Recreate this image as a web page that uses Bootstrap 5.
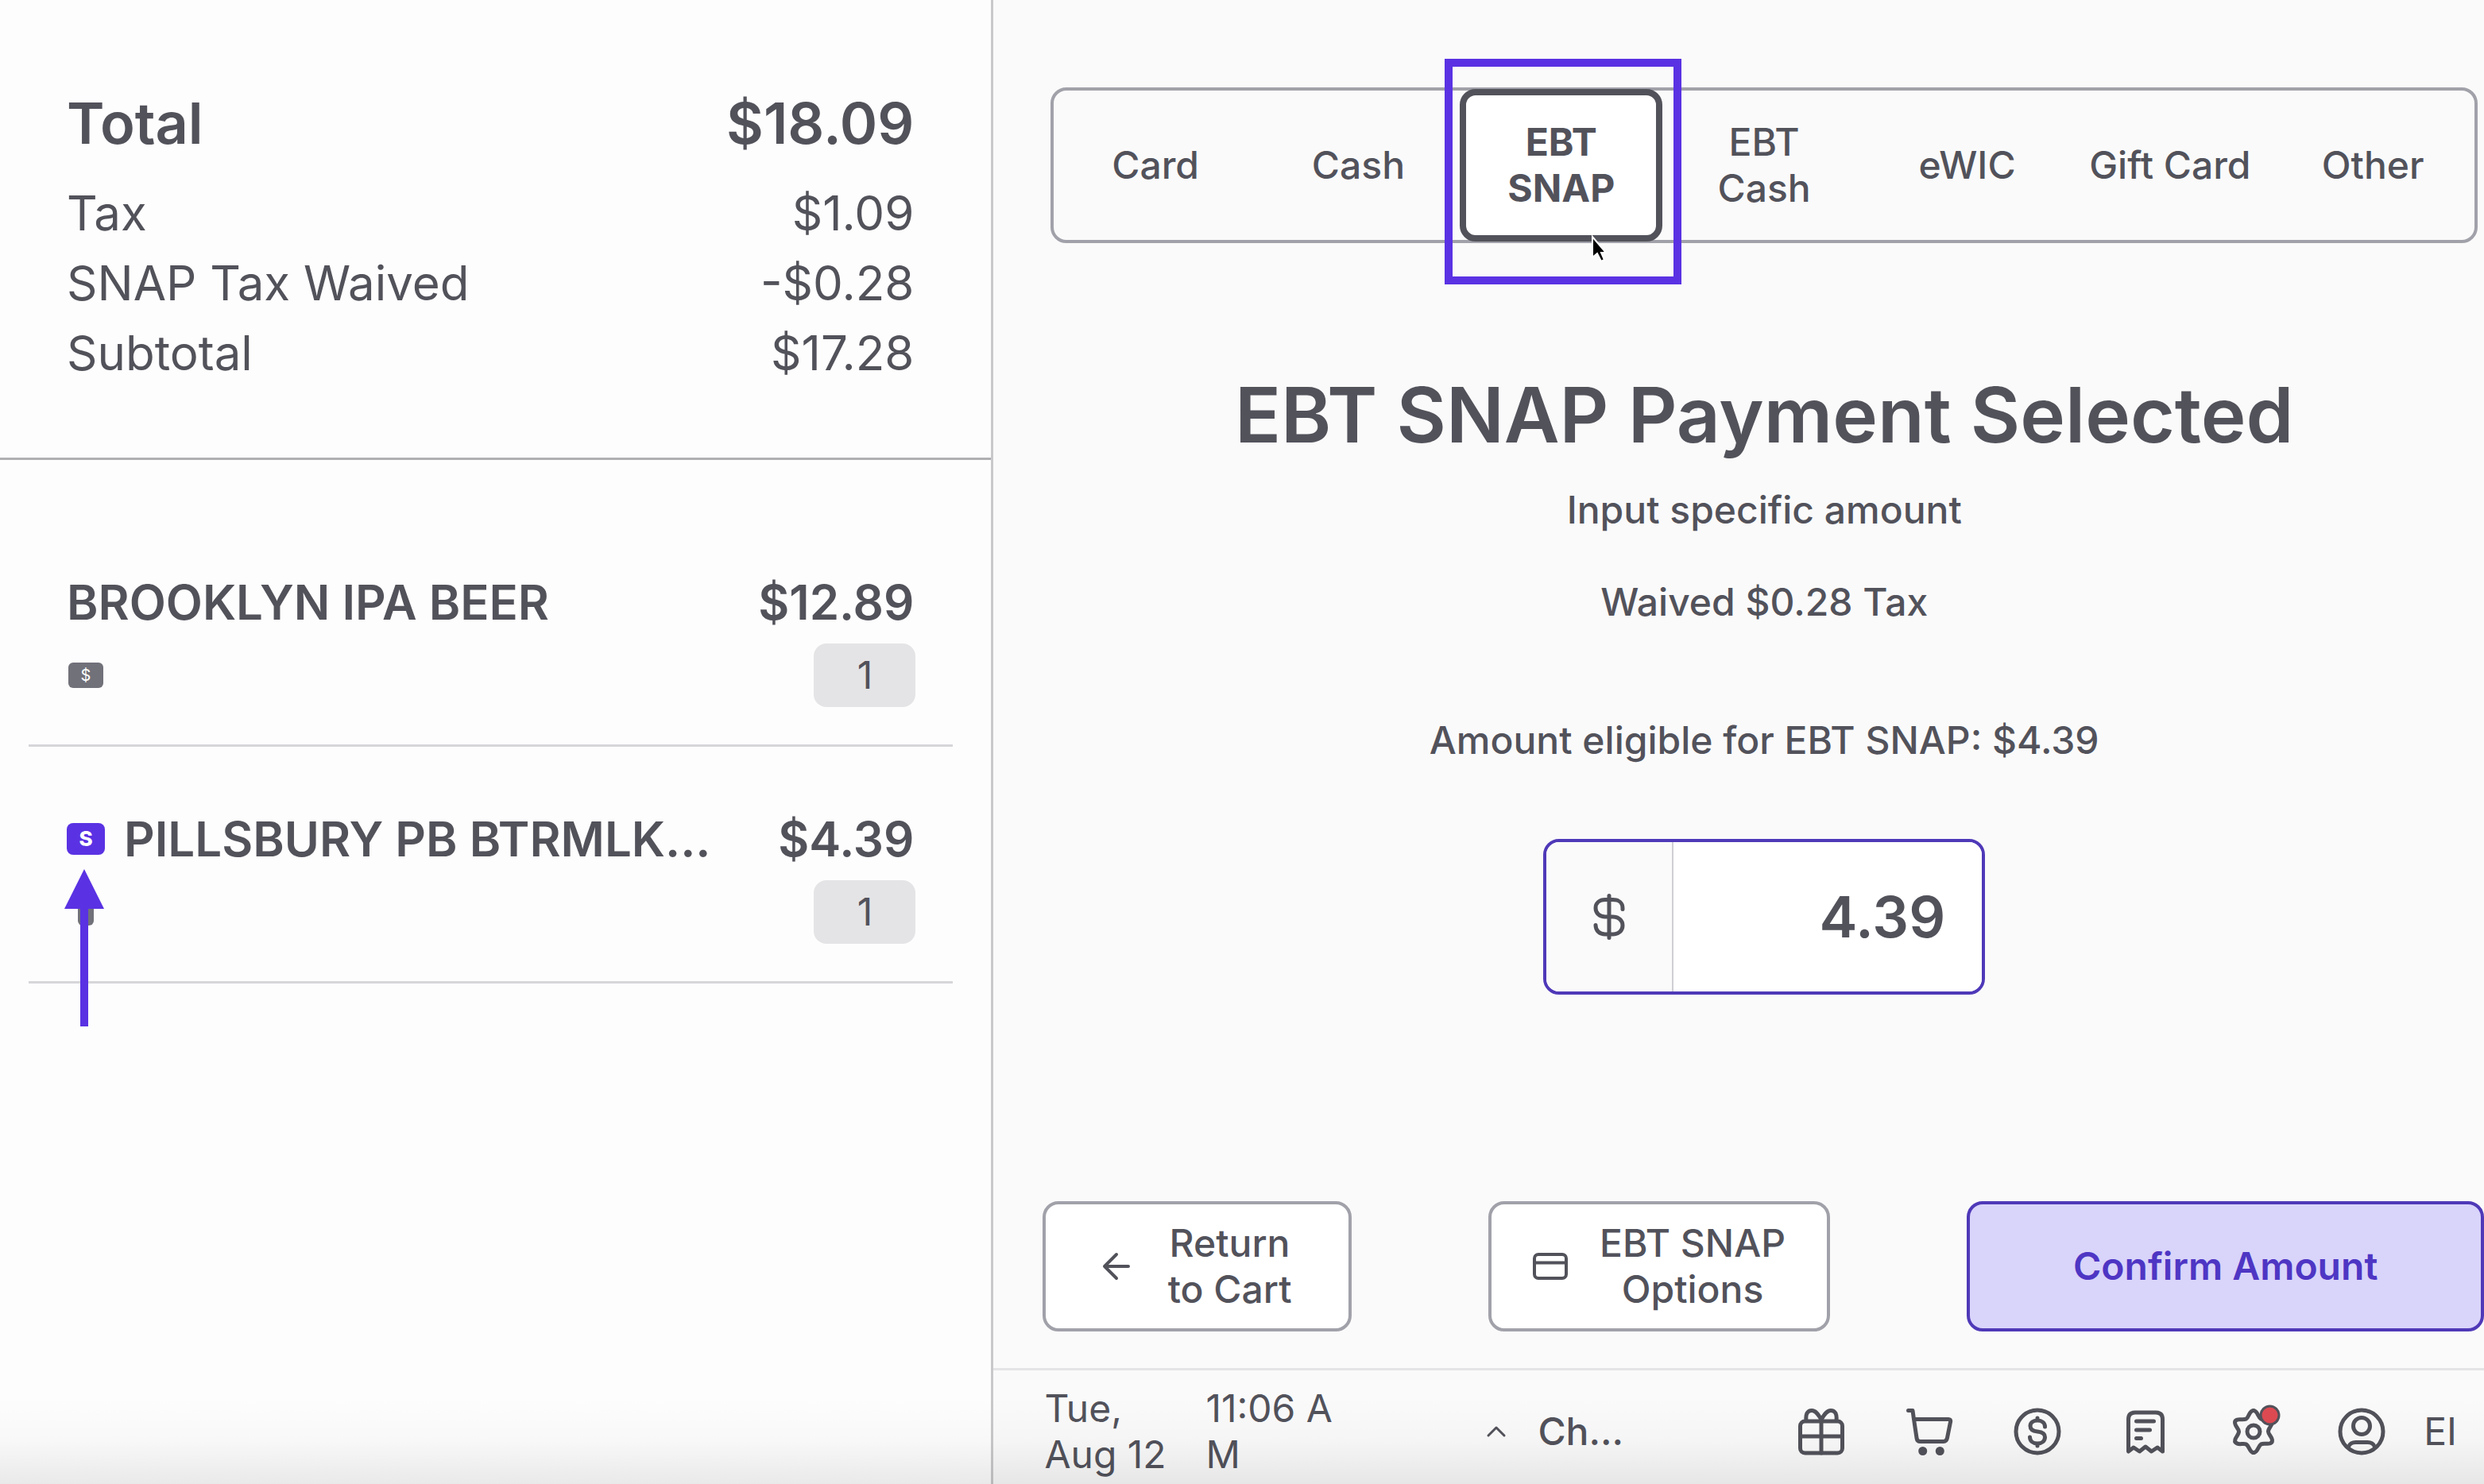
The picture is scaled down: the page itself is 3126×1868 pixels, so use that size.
<!DOCTYPE html>
<html lang="en">
<head>
<meta charset="utf-8">
<meta name="viewport" content="width=device-width, initial-scale=1">
<title>EBT SNAP Payment</title>
<link href="https://cdn.jsdelivr.net/npm/bootstrap@5.3.0/dist/css/bootstrap.min.css" rel="stylesheet">
<style>
  :root { --ink: #52525b; --line: #a1a1aa; --accent: #5a32e3; --accent-dark: #4f39b8; }
  body { font-family: Inter, "Liberation Sans", sans-serif; font-size: 48px; line-height: 58px; color: var(--ink); background: #fafafa; }
  svg { display: block; overflow: visible; flex: none; }
  .stroke-icon { fill: none; stroke: currentColor; stroke-width: 5; stroke-linecap: round; stroke-linejoin: round; }

  .cart-pane { flex: 0 0 40%; background: #fdfdfd; border-right: 3px solid #c8c8cb; }
  .totals { padding: 111px 97px 88px 84px; font-size: 60px; line-height: 88px; border-bottom: 3px solid #b0b0b3; }
  .grand-total { font-size: 72px; font-weight: 600; margin-bottom: 25px; }
  .line-items { margin: 0 48px 0 36px; padding-top: 63px; }
  .line-item { padding: 80px 47px 47px 48px; border-bottom: 3px solid #d6d6da; }
  .item-head { font-size: 60px; line-height: 72px; font-weight: 600; margin-bottom: 16px; padding-right: 2px; gap: 24px; }
  .qty { width: 128px; height: 80px; border: 0; border-radius: 16px; background: #e4e4e6; color: var(--ink); padding: 0; font-size: 48px; }
  .tag { display: flex; align-items: center; justify-content: center; color: #fff; border-radius: 6px; flex: none; }
  .tag-tender { width: 44px; height: 32px; margin-left: 2px; background: #71717a; font-size: 20px; line-height: 24px; }
  .tag-snap { width: 48px; height: 40px; border-radius: 8px; background: var(--accent); font-size: 26px; line-height: 32px; font-weight: 800; }
  .tag-small { width: 20px; height: 34px; margin-left: 14px; background: #71717a; }
  .arrow-note { position: absolute; left: -3px; top: 58px; color: var(--accent); }

  .pay-pane { min-width: 0; padding-top: 110px; }
  .tender-tabs { margin: 0 8px 156px 72px; height: 196px; border: 4px solid var(--line); border-radius: 20px; }
  .tender { width: 14.2857%; flex: none; padding: 0; border: 0; border-radius: 20px; background: none; color: var(--ink); font-weight: 500; }
  .tender.active { background: #fff; border: 8px solid var(--ink); font-weight: 700; margin: -2px 0; }
  .highlight { position: absolute; inset: -46px -32px -62px -27px; border: 10px solid var(--accent); z-index: 1; }
  .pointer { position: absolute; left: 157px; top: 177px; z-index: 2; }

  .amount-panel { margin: 0 8px 0 72px; font-weight: 500; }
  .amount-panel h1 { font-size: 96px; line-height: 120px; font-weight: 600; margin-bottom: 31px; }
  .hint { margin-bottom: 58px; }
  .waived { margin-bottom: 116px; }
  .eligible { margin-bottom: 95px; }
  .amount-box { width: 556px; height: 196px; border: 4px solid var(--accent-dark); border-radius: 20px; overflow: hidden; background: #fff; }
  .amount-box .input-group-text { width: 160px; border: 0; border-right: 2px solid #cfcfd4; border-radius: 0; background: #fafafa; color: var(--ink); justify-content: center; }
  .amount-box .form-control { margin-left: 0 !important; border: 0; padding: 0 46px 0 0; font-size: 72px; font-weight: 600; color: var(--ink); text-align: right; background: #fff; }

  .actions { padding: 0 0 46px 62px; gap: 172px; }
  .action { height: 164px; border: 4px solid var(--line); border-radius: 20px; background: #fff; color: var(--ink); font-weight: 500; padding: 0; display: flex; align-items: center; justify-content: center; }
  .action-return { flex: 387 1 0; gap: 48px; }
  .action-options { flex: 430 1 0; gap: 40px; }
  .action-confirm { flex: 654 1 0; background: #d9d4fa; border-color: var(--accent-dark); color: #4e36c4; font-weight: 600; }

  .status-bar { border-top: 3px solid #e4e4e7; padding: 19px 34px 8px 64px; }
  .status-bar a { color: inherit; text-decoration: none; }
  .status-date { width: 203px; }
  .status-time { width: 354px; }
  .menu-link { gap: 40px; font-weight: 500; }
  .tool-icons { gap: 76px; }
  .account { gap: 48px; }
  .bottom-shade { position: absolute; left: 0; right: 0; bottom: 0; height: 110px; pointer-events: none; background: linear-gradient(rgba(0,0,0,0), rgba(0,0,0,.02) 50%, rgba(0,0,0,.08)); }
</style>
</head>
<body>
<div class="d-flex min-vh-100 position-relative">
  <aside class="cart-pane">
    <section class="totals">
      <div class="grand-total d-flex justify-content-between"><span>Total</span><span>$18.09</span></div>
      <div class="d-flex justify-content-between"><span>Tax</span><span>$1.09</span></div>
      <div class="d-flex justify-content-between"><span>SNAP Tax Waived</span><span>-$0.28</span></div>
      <div class="d-flex justify-content-between"><span>Subtotal</span><span>$17.28</span></div>
    </section>
    <ul class="line-items list-unstyled">
      <li class="line-item">
        <div class="item-head d-flex"><span class="me-auto">BROOKLYN IPA BEER</span><span>$12.89</span></div>
        <div class="d-flex justify-content-between align-items-center"><span class="tag tag-tender">$</span><button class="qty" type="button">1</button></div>
      </li>
      <li class="line-item">
        <div class="item-head d-flex align-items-center">
          <span class="tag tag-snap position-relative">S
            <svg class="arrow-note" width="50" height="198" viewBox="0 0 50 198" fill="currentColor" aria-hidden="true"><path d="M25 0L50 50H30V198H20V50H0z"/></svg>
          </span>
          <span class="me-auto">PILLSBURY PB BTRMLK...</span><span>$4.39</span>
        </div>
        <div class="d-flex justify-content-between align-items-center"><span class="tag tag-small"></span><button class="qty" type="button">1</button></div>
      </li>
    </ul>
  </aside>

  <main class="pay-pane flex-grow-1 d-flex flex-column">
    <div class="tender-tabs d-flex" role="tablist">
      <button class="tender" type="button" role="tab">Card</button>
      <button class="tender" type="button" role="tab">Cash</button>
      <button class="tender active position-relative" type="button" role="tab" aria-selected="true">EBT<br>SNAP
        <span class="highlight"></span>
        <svg class="pointer" width="20" height="34" viewBox="0 0 20 34" aria-hidden="true"><path d="M2 1v26l6-5 5 10 4-2-4-9h6z" fill="#000" stroke="#fff" stroke-width="2"/></svg>
      </button>
      <button class="tender" type="button" role="tab">EBT<br>Cash</button>
      <button class="tender" type="button" role="tab">eWIC</button>
      <button class="tender" type="button" role="tab">Gift Card</button>
      <button class="tender" type="button" role="tab">Other</button>
    </div>

    <section class="amount-panel d-flex flex-column align-items-center text-center">
      <h1>EBT SNAP Payment Selected</h1>
      <p class="hint">Input specific amount</p>
      <p class="waived">Waived $0.28 Tax</p>
      <label class="eligible" for="amount">Amount eligible for EBT SNAP: $4.39</label>
      <div class="amount-box input-group flex-nowrap">
        <span class="input-group-text">
          <svg class="stroke-icon" width="40" height="58" viewBox="0 0 40 58" aria-hidden="true"><path d="M37 19.500V18C37 11.500 32 7.500 25 7.500H15C8 7.500 3 11.500 3 18s5 11 12 11h10c7 0 12 4.500 12 11s-5 11-12 11H15C8 51 3 46.500 3 39.500M20 2.500v53"/></svg>
        </span>
        <input id="amount" class="form-control shadow-none" type="text" inputmode="decimal" value="4.39">
      </div>
    </section>

    <div class="actions d-flex mt-auto">
      <button class="action action-return" type="button">
        <svg class="stroke-icon" width="34" height="34" viewBox="0 0 34 34" aria-hidden="true"><g stroke-width="4"><path d="M17 2L2 17l15 15M2 17h30"/></g></svg>
        <span>Return<br>to Cart</span>
      </button>
      <button class="action action-options" type="button">
        <svg class="stroke-icon" width="44" height="34" viewBox="0 0 44 34" aria-hidden="true"><g stroke-width="4"><rect x="2" y="2" width="40" height="30" rx="5"/><path d="M2 12.500h40"/></g></svg>
        <span>EBT SNAP<br>Options</span>
      </button>
      <button class="action action-confirm" type="button">Confirm Amount</button>
    </div>

    <footer class="status-bar d-flex align-items-center">
      <div class="status-date">Tue,<br>Aug 12</div>
      <div class="status-time">11:06 A<br>M</div>
      <a class="menu-link d-flex align-items-center" href="#">
        <svg class="stroke-icon" width="24" height="14" viewBox="0 0 24 14" aria-hidden="true"><path stroke-width="3" d="M2 12L12 2l10 10"/></svg>
        <span>Ch...</span>
      </a>
      <nav class="tool-icons d-flex align-items-center ms-auto">
        <a href="#" aria-label="Rewards"><svg class="stroke-icon" width="60" height="60" viewBox="0 0 60 60"><rect x="3.500" y="17" width="53" height="40" rx="6"/><path d="M30 17v40M3.500 36h53M30 15C26 8 23 3.500 18 3.500c-5 0-8 4-7 12.500M30 15c4-7 7-11.500 12-11.500 5 0 8 4 7 12.500"/></svg></a>
        <a href="#" aria-label="Cart"><svg class="stroke-icon" width="60" height="60" viewBox="0 0 60 60"><path d="M3.500 3.500H9l1.500 11h43.500c2 0 3 1 2.600 3L52.500 38c-.6 3-2 4.500-4.500 4.500H18.500c-2.500 0-4-1.500-4.400-4L10.500 14.500"/><g fill="currentColor" stroke="none"><circle cx="21.700" cy="54.500" r="5.500"/><circle cx="43.300" cy="54.500" r="5.500"/></g></svg></a>
        <a href="#" aria-label="Payments"><svg class="stroke-icon" width="60" height="60" viewBox="0 0 60 60"><circle cx="30" cy="30" r="27"/><path d="M39.500 24c0-5-4-8-9.500-8s-9 3-9 7c0 5 4 6.500 9 7s9.500 2 9.500 7-4 8-9.500 8-9.500-3-9.500-8M30 13v2M30 46v2"/></svg></a>
        <a href="#" aria-label="Receipts"><svg class="stroke-icon" width="60" height="60" viewBox="0 0 60 60"><path d="M8.500 55V14.500c0-5.500 3-8.500 8.500-8.500h26c5.500 0 8.500 3 8.500 8.500V55L45 50l-7.500 5-7.500-6-7.500 6-7.500-5zM18.500 17h22M18.500 28h17M18.500 38.500h6"/></svg></a>
        <a href="#" aria-label="Settings"><svg class="stroke-icon" width="60" height="60" viewBox="0 0 60 60"><defs><path id="cog" d="M30 3.500C35 3.500 35 11.500 39.250 14C43 16 50.200 12 52.900 16.750"/></defs><use href="#cog"/><use href="#cog" transform="rotate(60 30 30)"/><use href="#cog" transform="rotate(120 30 30)"/><use href="#cog" transform="rotate(180 30 30)"/><use href="#cog" transform="rotate(240 30 30)"/><use href="#cog" transform="rotate(300 30 30)"/><circle cx="30" cy="30" r="8"/><g stroke-width="3"><circle cx="50.500" cy="9.500" r="11.500" fill="#de4a52"/></g></svg></a>
        <a class="account d-flex align-items-center" href="#"><svg class="stroke-icon" width="60" height="60" viewBox="0 0 60 60" aria-hidden="true"><circle cx="30" cy="30" r="27"/><circle cx="30" cy="23" r="10.500"/><path d="M13.500 49.500c1-4 5-6 9-6h15c4 0 8 2 9 6"/></svg><span>EI</span></a>
      </nav>
    </footer>
  </main>
  <div class="bottom-shade"></div>
</div>
<script src="https://cdn.jsdelivr.net/npm/bootstrap@5.3.0/dist/js/bootstrap.bundle.min.js"></script>
</body>
</html>
